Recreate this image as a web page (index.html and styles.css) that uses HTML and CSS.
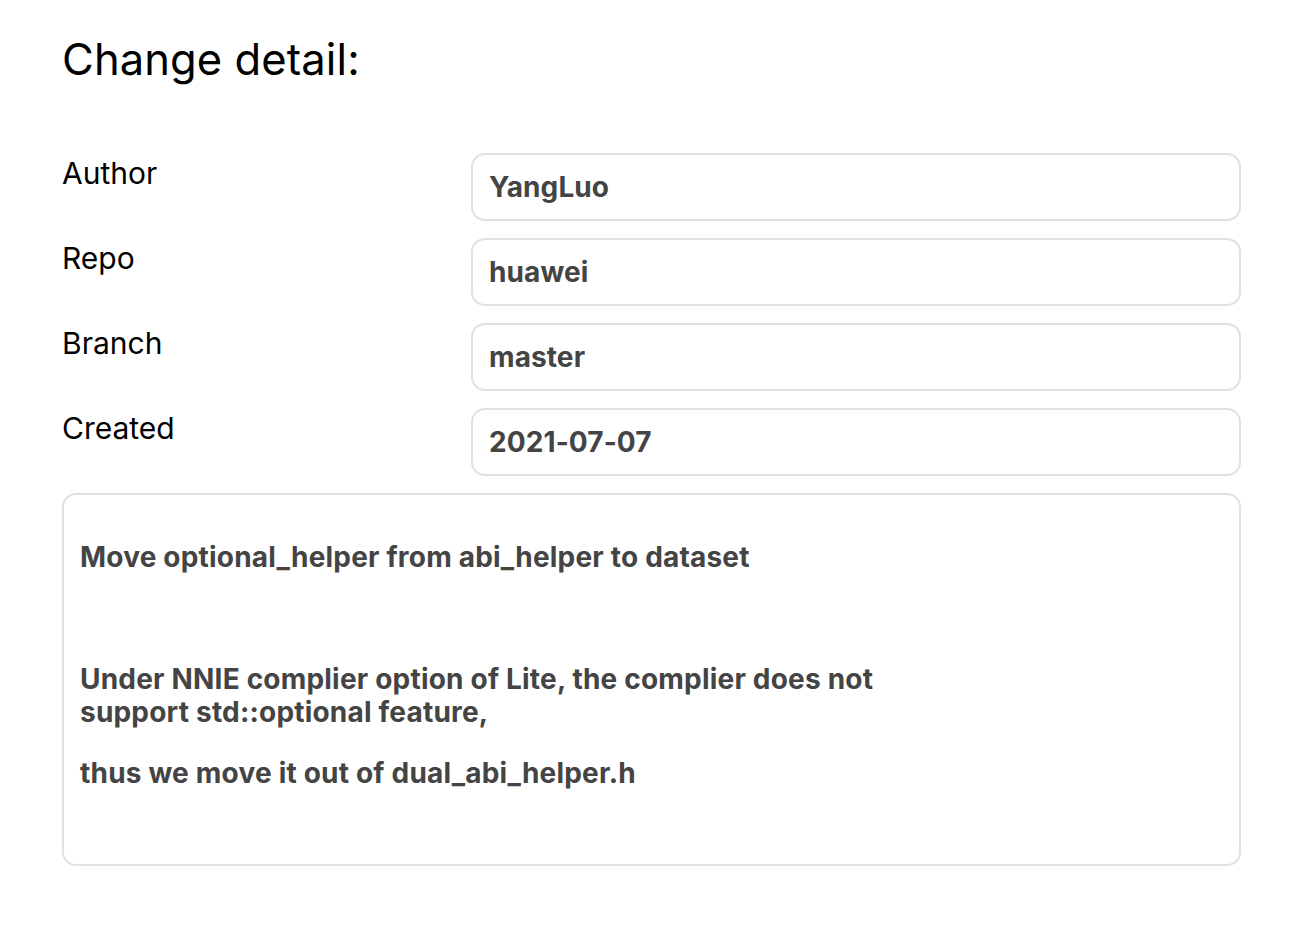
FILE: index.html
```html
<!DOCTYPE html>
<html>
<head>
<meta charset="utf-8">
<link rel="stylesheet" href="styles.css">
</head>
<body>
<main class="page">
  <h1 class="title">Change detail:</h1>
  <div class="fields">
    <div class="label">Author</div>
    <div class="value">YangLuo</div>
    <div class="label">Repo</div>
    <div class="value">huawei</div>
    <div class="label">Branch</div>
    <div class="value">master</div>
    <div class="label">Created</div>
    <div class="value">2021-07-07</div>
  </div>
  <div class="message">
    <p>Move optional_helper from abi_helper to dataset</p>
    <p><br></p>
    <p>Under NNIE complier option of Lite, the complier does not<br>support std::optional feature,</p>
    <p>thus we move it out of dual_abi_helper.h</p>
  </div>
</main>
</body>
</html>
```
FILE: styles.css
```css
html, body {
  margin: 0;
  padding: 0;
  background: #fff;
}
body {
  font-family: Inter, "Noto Sans", "Liberation Sans", sans-serif;
  color: #000;
}
.page {
  width: 1179px;
  padding: 0 0 0 62px;
}
.title {
  margin: 0;
  padding-top: 32px;
  height: 153px;
  box-sizing: border-box;
  font-size: 43.5px;
  font-weight: 400;
  line-height: 54px;
  letter-spacing: 0.1px;
}
.fields {
  display: grid;
  grid-template-columns: 409px 1fr;
  row-gap: 17px;
}
.label {
  font-size: 30px;
  line-height: 40px;
}
.value {
  height: 68px;
  box-sizing: border-box;
  border: 2px solid #e1e1e1;
  border-radius: 14px;
  padding: 0 16px;
  display: flex;
  align-items: center;
  font-size: 28px;
  font-weight: 700;
  color: #444;
  letter-spacing: 0.1px;
}
.message {
  margin-top: 17px;
  height: 373px;
  box-sizing: border-box;
  border: 2px solid #e1e1e1;
  border-radius: 14px;
  padding: 18px 16px;
  font-size: 28px;
  font-weight: 700;
  color: #444;
  line-height: 33px;
  letter-spacing: 0.2px;
}
.message p {
  margin: 28px 0;
}
```
